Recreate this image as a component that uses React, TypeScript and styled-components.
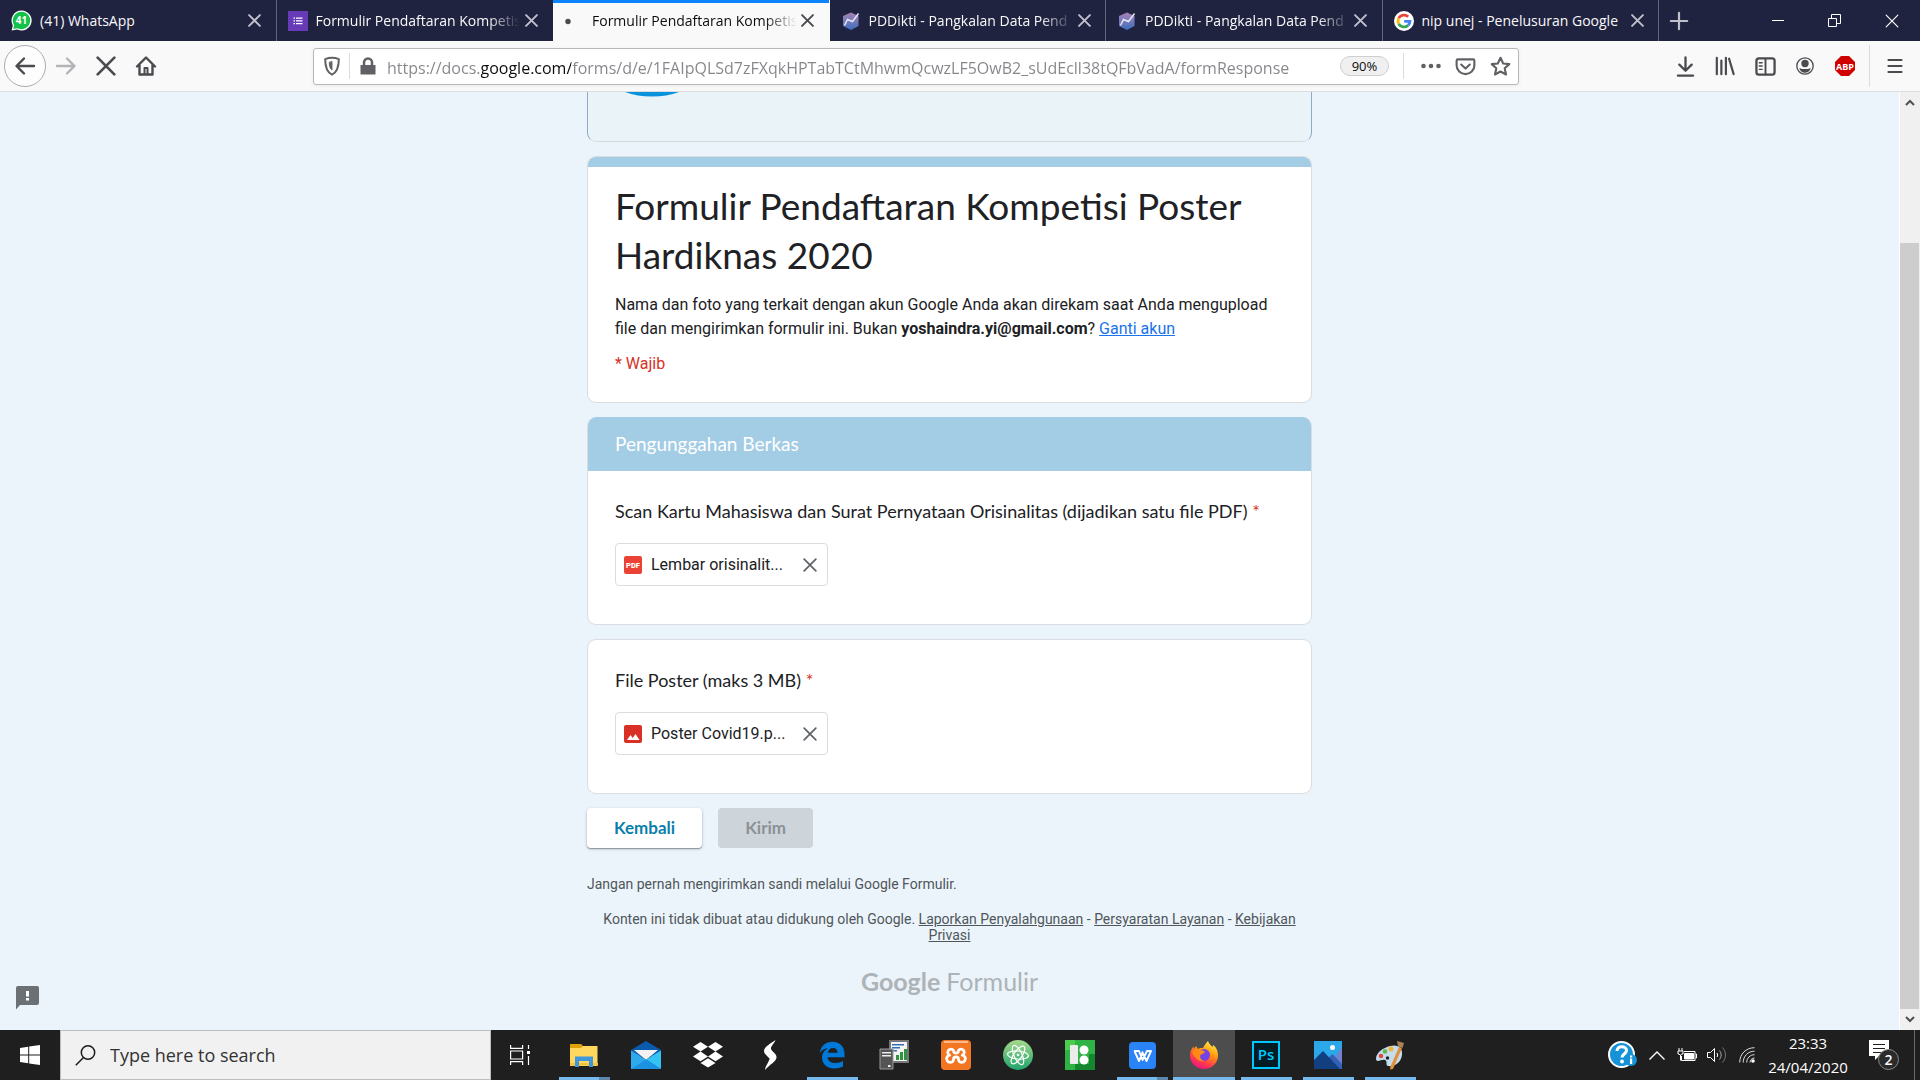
import React from "react";
import styled, { createGlobalStyle, css } from "styled-components";

const uiFont = `"Open Sans", "Noto Sans", sans-serif`;
const bodyFont = `Roboto, "Liberation Sans", sans-serif`;
const displayFont = `Lato, "Open Sans", sans-serif`;

const GlobalStyle = createGlobalStyle`
  *, *::before, *::after { box-sizing: border-box; }
  body { margin: 0; overflow: hidden; }
  button { border: 0; padding: 0; background: none; font: inherit; color: inherit; cursor: pointer; }
  svg { display: block; flex: none; }
`;

const Desktop = styled.div`
  display: flex;
  flex-direction: column;
  height: 100vh;
  font-family: ${uiFont};
`;

/* ---------- tab strip ---------- */

const TabStrip = styled.header`
  display: flex;
  flex: none;
  height: 41px;
  background: #202340;
`;

const TabList = styled.div`
  display: flex;
  flex: 0 1 1659px;
  min-width: 0;
`;

const TabItem = styled.div<{ $active?: boolean; $divider?: boolean }>`
  display: flex;
  flex: 1;
  min-width: 0;
  align-items: center;
  gap: 8px;
  padding: 0 11px 0 11px;
  font-size: 14px;
  color: #f9f9fa;
  border-right: 1px solid transparent;
  ${(p) => p.$divider && css`border-right-color: #63657a;`}
  ${(p) =>
    p.$active &&
    css`
      color: #0c0c0d;
      background: #f9f9fa;
      box-shadow: inset 0 3px 0 #0a84ff;
    `}
`;

const TabTitle = styled.span<{ $fade?: boolean }>`
  flex: 1;
  min-width: 0;
  margin-right: -7px;
  overflow: hidden;
  white-space: nowrap;
  line-height: 20px;
  ${(p) => p.$fade && css`mask-image: linear-gradient(to left, transparent, #000 32px);`}
`;

const TabClose = styled.button<{ $active?: boolean }>`
  display: grid;
  place-items: center;
  width: 20px;
  height: 20px;
  color: ${(p) => (p.$active ? "#4a4a4f" : "#bfc0cc")};
`;

const NewTab = styled.button`
  display: grid;
  place-items: center;
  width: 40px;
  color: #bfc0cc;
`;

const WindowButtons = styled.div`
  display: flex;
  margin-left: auto;
  color: #fff;
`;

const WindowButton = styled.button`
  display: grid;
  place-items: center;
  width: 57px;
`;

/* ---------- toolbar ---------- */

const Toolbar = styled.nav`
  display: flex;
  flex: none;
  align-items: center;
  height: 51px;
  padding-left: 5px;
  background: #f9f9fa;
  border-bottom: 1px solid #dcdcde;
  color: #4a4a4f;
`;

const ToolButton = styled.button<{ $round?: boolean; $dim?: boolean; $wide?: boolean }>`
  display: grid;
  flex: none;
  place-items: center;
  width: ${(p) => (p.$wide ? 50 : 40)}px;
  height: 40px;
  ${(p) => p.$dim && css`color: #b4b4b7;`}
  ${(p) =>
    p.$round &&
    css`
      width: 42px;
      height: 42px;
      margin-left: -1px;
      border: 1px solid #acacae;
      border-radius: 50%;
      background: #fdfdfd;
    `}
`;

const Divider = styled.span<{ $tall?: boolean }>`
  flex: none;
  width: 1px;
  height: ${(p) => (p.$tall ? 42 : 26)}px;
  margin-left: ${(p) => (p.$tall ? 4 : 0)}px;
  background: #dcdcde;
`;

const UrlBar = styled.div`
  display: flex;
  flex: 1;
  min-width: 0;
  align-items: center;
  height: 37px;
  margin: 0 146px 0 147px;
  background: #fff;
  border: 1px solid #b8b8ba;
  border-radius: 3px;
  box-shadow: 0 1px 4px rgba(0, 0, 0, 0.06);
  color: #616165;
`;

const UrlActions = styled.div`
  display: flex;
  flex: none;
  padding-left: 9px;
`;

const UrlIcon = styled.button`
  display: grid;
  flex: none;
  place-items: center;
  width: 35px;
  height: 35px;
`;

const UrlInput = styled.input`
  flex: 1;
  min-width: 0;
  height: 32px;
  padding: 3px 0 0 2px;
  border: 0;
  outline: 0;
  font: 16px/24px ${uiFont};
  color: transparent;
  background: linear-gradient(to right, #85858a 96px, #0c0c0d 96px, #0c0c0d 186px, #85858a 186px);
  background-clip: text;
  -webkit-background-clip: text;
`;

const ZoomBadge = styled.button`
  flex: none;
  width: 49px;
  height: 20px;
  margin-right: 14px;
  border: 1px solid #cfcfd1;
  border-radius: 10px;
  background: #f0f0f1;
  color: #0c0c0d;
  font-size: 13px;
  line-height: 18px;
`;

/* ---------- page ---------- */

const Viewport = styled.div`
  display: flex;
  flex: 1;
  min-height: 0;
`;

const Page = styled.main`
  display: flex;
  flex: 1;
  min-width: 0;
  flex-direction: column;
  align-items: center;
  position: relative;
  overflow: hidden;
  background: #ebf4fa;
  font-family: ${bodyFont};
  color: #202124;
`;

const Form = styled.form`
  display: flex;
  flex-direction: column;
  gap: 14px;
  width: 100%;
  max-width: 725px;
`;

const Banner = styled.div`
  height: 50px;
  overflow: hidden;
  border: 1px solid #d5dce1;
  border-top: 0;
  border-left-color: #8fa9cb;
  border-right-color: #8fa9cb;
  border-radius: 0 0 9px 9px;
  background: #eaf3f8;
`;

const Card = styled.section`
  overflow: hidden;
  border: 1px solid #dadce0;
  border-radius: 9px;
  background: #fff;
`;

const IntroCard = styled(Card)`
  padding: 0 27px 26px;
`;

const IntroBand = styled.div`
  height: 11px;
  margin: -1px -28px 14px;
  background: #a3cce5;
`;

const FormTitle = styled.h1`
  margin: 0 0 14px;
  font: 400 37px/49px ${displayFont};
`;

const Notice = styled.p`
  margin: 0 0 11px;
  font-size: 16px;
  line-height: 24px;
  &:last-child {
    margin-bottom: 0;
  }
`;

const AccountLink = styled.a`
  color: #1a73e8;
`;

const Required = styled.span`
  color: #d93025;
`;

const SectionCard = styled(Card)`
  border-top: 0;
`;

const SectionHead = styled.h2`
  margin: 0 -1px;
  padding: 15px 28px;
  background: #a3cce5;
  color: #fff;
  font: 400 19px/24px ${displayFont};
`;

const Question = styled.div`
  padding: 27px 27px 38px;
`;

const QuestionTitle = styled.h3`
  margin: 0 0 19px;
  font: 400 18px/26px ${displayFont};
`;

const FileChip = styled.div`
  display: flex;
  align-items: center;
  width: 213px;
  height: 43px;
  padding: 0 7px 0 8px;
  border: 1px solid #dadce0;
  border-radius: 4px;
`;

const FileName = styled.span`
  flex: 1;
  margin-left: 9px;
  font-size: 16px;
  line-height: 24px;
  white-space: nowrap;
`;

const RemoveFile = styled.button`
  display: grid;
  place-items: center;
  width: 20px;
  height: 24px;
  color: #5f6368;
`;

const Actions = styled.div`
  display: flex;
  gap: 16px;
`;

const ActionButton = styled.button<{ $disabled?: boolean }>`
  height: 40px;
  padding: 0 27px;
  border-radius: 4px;
  background: #fff;
  color: #0b7fab;
  font: 700 17px/24px ${displayFont};
  box-shadow: 0 1px 3px rgba(60, 64, 67, 0.3), 0 1px 1px rgba(60, 64, 67, 0.4);
  ${(p) =>
    p.$disabled &&
    css`
      background: #ced5da;
      color: #8b9196;
      box-shadow: none;
    `}
`;

const Footer = styled.footer`
  width: 100%;
  max-width: 725px;
  color: #50565a;
  font-size: 14px;
  line-height: 16px;
`;

const Warning = styled.p`
  margin: 28px 0 19px;
`;

const Legal = styled.p`
  margin: 0;
  padding: 0 12px;
  text-align: center;
`;

const FooterLink = styled.a`
  color: inherit;
`;

const Brand = styled.a`
  display: flex;
  justify-content: center;
  align-items: baseline;
  gap: 6px;
  margin-top: 22px;
  color: #adb3b7;
  font: 400 25px/32px ${displayFont};
  text-decoration: none;
`;

const BrandName = styled.span`
  font-weight: 700;
`;

const Feedback = styled.button`
  position: absolute;
  left: 15px;
  bottom: 20px;
  color: #6b7074;
`;

const Scrollbar = styled.div`
  display: flex;
  flex: none;
  flex-direction: column;
  width: 21px;
  background: #f0f0f0;
  border-left: 1px solid #fff;
`;

const ScrollButton = styled.button`
  display: grid;
  place-items: center;
  height: 21px;
  color: #505050;
`;

const ScrollTrack = styled.div`
  display: flex;
  flex: 1;
  align-items: flex-end;
`;

const ScrollThumb = styled.div`
  flex: 1;
  height: 85.5%;
  margin-right: 1px;
  background: #cdcdcd;
`;

/* ---------- taskbar ---------- */

const Taskbar = styled.footer`
  display: flex;
  flex: none;
  height: 50px;
  background: #1f1f1f;
  color: #fff;
`;

const StartButton = styled.button`
  display: grid;
  place-items: center;
  width: 60px;
`;

const SearchBox = styled.label`
  display: flex;
  align-items: center;
  gap: 14px;
  width: 431px;
  padding: 0 14px;
  border: 1px solid #bdbdbd;
  background: #f1f1f1;
  color: #1b1b1b;
`;

const SearchInput = styled.input`
  flex: 1;
  min-width: 0;
  padding: 0;
  border: 0;
  outline: 0;
  background: none;
  font: 18px/24px ${uiFont};
  &::placeholder {
    color: #333;
    opacity: 1;
  }
`;

const TaskButton = styled.button<{ $state?: "open" | "stacked" | "active" }>`
  display: grid;
  place-items: center;
  width: 62px;
  border-bottom: 3px solid transparent;
  border-top: 3px solid transparent;
  background: no-repeat center bottom / 51px 3px border-box;
  ${(p) => p.$state === "open" && css`background-image: linear-gradient(#76b9ed, #76b9ed);`}
  ${(p) =>
    p.$state === "stacked" &&
    css`background-image: linear-gradient(to right, #76b9ed 40px, #5a87ab 40px);`}
  ${(p) =>
    p.$state === "active" &&
    css`
      background: #4d4d4d;
      background-clip: border-box;
      border-top-color: #4d4d4d;
      border-bottom-color: #76b9ed;
    `}
`;

const Tray = styled.div`
  display: flex;
  align-items: stretch;
  margin-left: auto;
`;

const TrayButton = styled.button<{ $wide?: boolean }>`
  display: grid;
  place-items: center;
  width: ${(p) => (p.$wide ? 38 : 30)}px;
`;

const Clock = styled.button`
  width: 92px;
  font-size: 15px;
  line-height: 24px;
  white-space: nowrap;
`;

const Notifications = styled.button`
  display: grid;
  place-items: center;
  width: 60px;
`;

const ShowDesktop = styled.button`
  width: 6px;
  border-left: 1px solid #6b6b6b;
`;

/* ---------- icons ---------- */

const Cross = ({ size = 12, width = 2 }: { size?: number; width?: number }) => (
  <svg width={size} height={size} viewBox="0 0 12 12" fill="none" stroke="currentColor" strokeWidth={width} strokeLinecap="round">
    <path d="M1 1l10 10M11 1L1 11" />
  </svg>
);

const Stroke = ({ children, size = 22, width = 2.4 }: { children: React.ReactNode; size?: number; width?: number }) => (
  <svg width={size} height={size} viewBox="0 0 22 22" fill="none" stroke="currentColor" strokeWidth={width} strokeLinecap="round" strokeLinejoin="round">
    {children}
  </svg>
);

const WhatsAppIcon = () => (
  <svg width="21" height="21" viewBox="0 0 21 21">
    <path d="M10.5.5a10 10 0 1 1-4 19.1L.6 20.6l1.200-5.200A10 10 0 0 1 10.500.5z" fill="#fff" />
    <path d="M10.500 1.700a8.700 8.700 0 1 1-3.900 16.500l-4.300.900.900-4A8.700 8.700 0 0 1 10.500 1.700z" fill="#14c24b" />
    <text x="10.500" y="14" fontSize="10" fontWeight="700" fill="#fff" textAnchor="middle" fontFamily="Open Sans">41</text>
  </svg>
);

const FormsIcon = () => (
  <svg width="20" height="20" viewBox="0 0 20 20">
    <path fill="#673ab7" d="M0 0h20v20H0z" />
    <path fill="#fff" d="M5.500 6.500h1.500v1.300H5.500zM8 6.500h6.500v1.300H8zM5.500 9.300h1.500v1.300H5.500zM8 9.300h6.500v1.300H8zM5.500 12h1.500v1.300H5.500zM8 12h6.500v1.300H8z" />
  </svg>
);

const LoadingDot = () => (
  <svg width="20" height="20" viewBox="0 0 20 20">
    <circle cx="4" cy="10.500" r="2.700" fill="#4a4a4f" />
  </svg>
);

const PddiktiIcon = () => (
  <svg width="20" height="20" viewBox="0 0 20 20">
    <defs>
      <linearGradient id="pddikti" x1="0" y1="0" x2="0" y2="1">
        <stop offset="0" stopColor="#a883b5" />
        <stop offset="1" stopColor="#3d6fbe" />
      </linearGradient>
    </defs>
    <path d="M10 1.500l7.500 3.500v10L10 19l-8-4V5z" fill="url(#pddikti)" />
    <path d="M3.500 14.500L6.500 8.500l5 2L17.500 2.500" fill="none" stroke="#e9e6f5" strokeWidth="1.500" />
  </svg>
);

const GoogleIcon = () => (
  <svg width="20" height="20" viewBox="0 0 20 20">
    <circle cx="10" cy="10" r="10" fill="#fff" />
    <g fill="none" strokeWidth="2.800">
      <path d="M14.200 5.800A6 6 0 0 0 4.700 7.200" stroke="#ea4335" />
      <path d="M4.700 7.200a6 6 0 0 0 0 5.600" stroke="#fbbc05" />
      <path d="M4.700 12.800a6 6 0 0 0 9.300 1.600" stroke="#34a853" />
      <path d="M14 14.400A6 6 0 0 0 16 10.300H10.200" stroke="#4285f4" />
    </g>
  </svg>
);

const AbpIcon = () => (
  <svg width="20" height="20" viewBox="0 0 20 20">
    <path d="M6 0h8l6 6v8l-6 6H6l-6-6V6z" fill="#d00000" />
    <text x="10" y="13.500" fontSize="9" fontWeight="700" fill="#fff" textAnchor="middle" fontFamily="Open Sans">ABP</text>
  </svg>
);

const PdfIcon = () => (
  <svg width="18" height="18" viewBox="0 0 18 18">
    <rect width="18" height="18" rx="2" fill="#ea4335" />
    <text x="9" y="11.800" fontSize="7.500" fontWeight="900" fill="#fff" textAnchor="middle" fontFamily="Roboto">PDF</text>
  </svg>
);

const ImageIcon = () => (
  <svg width="18" height="18" viewBox="0 0 18 18">
    <rect width="18" height="18" rx="2" fill="#d93025" />
    <path d="M3 15l3.500-5 2.200 3 2.800-4 4 6z" fill="#fff" />
  </svg>
);

const appIcons = {
  explorer: (
    <svg width="28" height="26" viewBox="0 0 28 26">
      <path d="M0 2h11l3 3-3 4H0z" fill="#e0a106" />
      <path d="M13 4h14.500v20H0V6h11z" fill="#ffd75e" />
      <path d="M0 21h28v2.500H0z" fill="#f5c33b" />
      <path d="M5 14.500h18V25h-4v-6H9v6H5z" fill="#3f96da" />
    </svg>
  ),
  mail: (
    <svg width="30" height="28" viewBox="0 0 30 28">
      <path d="M0 9L15 0l15 9v6H0z" fill="#0a5aae" />
      <path d="M3 9h24L15 19z" fill="#f2f2f2" />
      <path d="M0 9.500l15 9L30 28H0z" fill="#2fa8ec" />
      <path d="M30 9.500L15 18.500 30 28z" fill="#35c3f5" />
      <path d="M0 28l15-9.500L30 28z" fill="#1c93e2" />
    </svg>
  ),
  dropbox: (
    <svg width="30" height="26" viewBox="0 0 30 26" fill="#fff">
      <path d="M7.500 0L15 4.800 7.500 9.600 0 4.800zM22.500 0L30 4.800l-7.500 4.800L15 4.800zM7.500 9.600l7.500 4.800-7.500 4.800L0 14.400zM22.500 9.600l7.500 4.800-7.500 4.800-7.500-4.800zM15 16.200l7.500 4.700L15 25.500l-7.500-4.600z" />
    </svg>
  ),
  bolt: (
    <svg width="16" height="30" viewBox="0 0 16 30" fill="#fff">
      <path d="M13.500 0C9 3 2 7 2 11c0 2 1.500 3.500 3.500 5.500L9 20l5.500-2.500C15 14 10 12 9 9c-.5-3 3-5 4.500-9z" />
      <path d="M14.500 17.500C14 22 8 24 3 30c0-3 2-5 3-7.500L9 16z" />
    </svg>
  ),
  edge: (
    <svg width="26" height="28" viewBox="0 0 26 28" fill="#0078d7">
      <path d="M.8 12C2 4.500 7 .8 13.500.8 21 .8 25.500 6 25.500 13v3.200H8.500c.3 4 4 5.800 8 5.800 3 0 5.500-.8 7.500-2v5.500c-2.300 1.300-5.500 2-8.500 2C8 27.500 3 23 3 16.500 3 12 6 9 9 7.300 5 7.800 2.500 9.300.8 12zM9 11.800h9.500c0-3-1.500-4.800-4.500-4.800-2.800 0-4.600 2-5 4.800z" />
    </svg>
  ),
  server: (
    <svg width="30" height="30" viewBox="0 0 30 30">
      <path d="M11 1h18v21H11z" fill="#f4f4f4" stroke="#777" strokeWidth="2" />
      <path d="M13 4h12v1.500H13zM13 7h8v1.500h-8zM13 10h5v1.500h-5z" fill="#2f6fb5" />
      <path d="M17 15h3v5h-3zM21 12h3v8h-3zM25 9h3v11h-3z" fill="#2f9440" />
      <path d="M1 9h13v20H1z" fill="#555" stroke="#9a9a9a" />
      <path d="M3 12h9v1.500H3zM3 15h9v1.500H3zM9 25h2.500v2H9z" fill="#eee" />
    </svg>
  ),
  xampp: (
    <svg width="30" height="30" viewBox="0 0 30 30">
      <rect width="30" height="30" rx="4" fill="#f37623" />
      <path d="M3 1h24v2H3z" fill="#f9b98a" />
      <path d="M12.500 11.500V10.300a3.200 3.200 0 1 0-3.800 4.900 3.600 3.600 0 1 0 3.800 5V18.500M17.500 11.500V10.300a3.200 3.200 0 1 1 3.800 4.900 3.600 3.600 0 1 1-3.800 5V18.500M12.500 11.500c.5 2 4.500 2 5 0M12.500 18.500c.5-2 4.500-2 5 0" fill="none" stroke="#fff" strokeWidth="2.800" strokeLinejoin="round" />
    </svg>
  ),
  atom: (
    <svg width="30" height="30" viewBox="0 0 30 30">
      <defs>
        <linearGradient id="atom" x1="0" y1="0" x2="0" y2="1">
          <stop offset="0" stopColor="#a5d98c" />
          <stop offset="1" stopColor="#1fa36c" />
        </linearGradient>
      </defs>
      <circle cx="15" cy="15" r="15" fill="url(#atom)" />
      <g fill="none" stroke="#fff" strokeWidth="1.200">
        <ellipse cx="15" cy="15" rx="10.500" ry="4" transform="rotate(5 15 15)" />
        <ellipse cx="15" cy="15" rx="10.500" ry="4" transform="rotate(65 15 15)" />
        <ellipse cx="15" cy="15" rx="10.500" ry="4" transform="rotate(125 15 15)" />
      </g>
      <circle cx="15" cy="15" r="1.300" fill="#fff" />
    </svg>
  ),
  icons8: (
    <svg width="30" height="30" viewBox="0 0 30 30">
      <path d="M0 0h30v30H0z" fill="#2fb344" />
      <path d="M0 0h10v10H0z" fill="#4dcc4d" />
      <path d="M10 24h20v6H10zM24 14h6v16h-6z" fill="#15872f" />
      <rect x="5" y="5" width="8" height="19" rx="1" fill="#ececec" />
      <circle cx="19" cy="10" r="4.500" fill="#fff" />
      <circle cx="19" cy="20" r="4.500" fill="#fff" />
    </svg>
  ),
  wps: (
    <svg width="27" height="27" viewBox="0 0 27 27">
      <rect width="27" height="27" rx="4" fill="#2b84f5" />
      <path d="M5 9h5l3.500 9L18 9h4l-4.500 10L13 9.500M5.500 9L10 19l3.500-8" fill="none" stroke="#fff" strokeWidth="1.900" strokeLinejoin="round" />
    </svg>
  ),
  firefox: (
    <svg width="30" height="30" viewBox="0 0 30 30">
      <defs>
        <linearGradient id="fox" x1=".8" y1="0" x2=".3" y2="1">
          <stop offset="0" stopColor="#fff44f" />
          <stop offset=".4" stopColor="#ff980e" />
          <stop offset=".75" stopColor="#ff3750" />
          <stop offset="1" stopColor="#e31587" />
        </linearGradient>
      </defs>
      <path d="M19 1c1 3 3 4 4.500 6l1-2C28 8 29 12 29 15.500 29 23 23 29 15 29S1 23 1 15.500C1 12 2 9 4.500 6.500L5 9l2-3 2 3c2-1.500 3-1 5-1 1.500-3 3-5 5-7z" fill="url(#fox)" />
      <circle cx="15" cy="15" r="6" fill="#7542e5" />
      <path d="M3 12c3-3 6-3.500 8-2 2 .5 4 0 5 2-1 2-3 1.500-4.500 3-1 2.500 0 5 4 6-6 1.500-9.500-3-12.500-9z" fill="#ff8a16" />
    </svg>
  ),
  photoshop: (
    <svg width="28" height="28" viewBox="0 0 28 28">
      <path d="M1 1h26v26H1z" fill="#001d26" stroke="#00c8ff" strokeWidth="2" />
      <text x="14" y="19" fontSize="15" fontWeight="600" fill="#00c8ff" textAnchor="middle" fontFamily="Open Sans">Ps</text>
    </svg>
  ),
  photos: (
    <svg width="28" height="28" viewBox="0 0 28 28">
      <path d="M0 0h28v28H0z" fill="#2aa8ea" />
      <path d="M28 6v22H12z" fill="#6f83d2" />
      <path d="M10 21l8.500-8L28 23v5H10z" fill="#3461b8" />
      <path d="M0 19L9 10l17 18H0z" fill="#123f80" />
      <circle cx="18.500" cy="6.500" r="2.500" fill="#fff" />
    </svg>
  ),
  paint: (
    <svg width="30" height="30" viewBox="0 0 30 30">
      <path d="M15 6c8-2 13 2 12 9-1 8-8 12-14 11-3-1 0-5-3-6-4-1-9 4-9-2C2 12 8 8 15 6z" fill="#c5dcef" />
      <circle cx="6" cy="16" r="2.300" fill="#e0493f" />
      <circle cx="10" cy="11.500" r="2.300" fill="#5db948" />
      <circle cx="16" cy="9" r="2.500" fill="#f2b632" />
      <circle cx="12.500" cy="18" r="1.700" fill="#1f1f1f" />
      <path d="M24 7l3 1-9 21-3 .5.500-3z" fill="#e0913a" />
      <path d="M22 1l7 2-1.500 5-4.500-1.500z" fill="#a98458" />
    </svg>
  ),
};

const tabs = [
  { title: "(41) WhatsApp", icon: <WhatsAppIcon />, divider: true },
  { title: "Formulir Pendaftaran Kompetisi", icon: <FormsIcon />, fade: true },
  { title: "Formulir Pendaftaran Kompetisi", icon: <LoadingDot />, active: true, fade: true },
  { title: "PDDikti - Pangkalan Data Pend", icon: <PddiktiIcon />, divider: true, fade: true },
  { title: "PDDikti - Pangkalan Data Pend", icon: <PddiktiIcon />, divider: true, fade: true },
  { title: "nip unej - Penelusuran Google", icon: <GoogleIcon />, divider: true },
];

const apps: { name: string; icon: React.ReactNode; state?: "open" | "stacked" | "active" }[] = [
  { name: "File Explorer", icon: appIcons.explorer, state: "stacked" },
  { name: "Mail", icon: appIcons.mail },
  { name: "Dropbox", icon: appIcons.dropbox },
  { name: "Shortcut", icon: appIcons.bolt },
  { name: "Edge", icon: appIcons.edge, state: "open" },
  { name: "Server", icon: appIcons.server },
  { name: "XAMPP", icon: appIcons.xampp },
  { name: "Atom", icon: appIcons.atom },
  { name: "Icons8", icon: appIcons.icons8 },
  { name: "WPS", icon: appIcons.wps, state: "stacked" },
  { name: "Firefox", icon: appIcons.firefox, state: "active" },
  { name: "Photoshop", icon: appIcons.photoshop, state: "open" },
  { name: "Photos", icon: appIcons.photos, state: "open" },
  { name: "Paint", icon: appIcons.paint, state: "open" },
];

function UploadQuestion({ title, file, icon }: { title: string; file: string; icon: React.ReactNode }) {
  return (
    <Question>
      <QuestionTitle>
        {title} <Required>*</Required>
      </QuestionTitle>
      <FileChip>
        {icon}
        <FileName>{file}</FileName>
        <RemoveFile type="button" aria-label="Hapus file">
          <Cross size={14} width={1.5} />
        </RemoveFile>
      </FileChip>
    </Question>
  );
}

export default function App() {
  return (
    <Desktop>
      <GlobalStyle />
      <TabStrip>
        <TabList>
          {tabs.map((t, i) => (
            <TabItem key={i} $active={t.active} $divider={t.divider}>
              {t.icon}
              <TabTitle $fade={t.fade}>{t.title}</TabTitle>
              <TabClose $active={t.active} aria-label="Close tab">
                <Cross size={13} width={1.8} />
              </TabClose>
            </TabItem>
          ))}
        </TabList>
        <NewTab aria-label="New tab">
          <Stroke size={20} width={2.4}><path d="M11 2v18M2 11h18" /></Stroke>
        </NewTab>
        <WindowButtons>
          <WindowButton aria-label="Minimize">
            <svg width="12" height="12" viewBox="0 0 12 12" stroke="currentColor"><path d="M0 5.500h12" /></svg>
          </WindowButton>
          <WindowButton aria-label="Restore">
            <svg width="13" height="13" viewBox="0 0 13 13" fill="none" stroke="currentColor"><path d="M.5 4.500h8v8h-8zM3.500 4.500v-4h9v9h-4" /></svg>
          </WindowButton>
          <WindowButton aria-label="Close">
            <Cross size={14} width={1} />
          </WindowButton>
        </WindowButtons>
      </TabStrip>

      <Toolbar>
        <ToolButton $round aria-label="Back">
          <Stroke><path d="M20 11H3M10 3.500L2.500 11l7.500 7.500" /></Stroke>
        </ToolButton>
        <ToolButton $dim aria-label="Forward">
          <Stroke><path d="M2 11h17M12 3.500l7.500 7.500-7.500 7.500" /></Stroke>
        </ToolButton>
        <ToolButton aria-label="Stop"><Cross size={20} width={1.6} /></ToolButton>
        <ToolButton aria-label="Home">
          <Stroke>
            <path d="M2 11.500L11 2.500l9 9M4.500 10v9.500h13V10" />
            <path d="M9.500 19v-6h3v6" strokeWidth="2" />
          </Stroke>
        </ToolButton>
        <UrlBar>
          <UrlIcon aria-label="Tracking protection">
            <Stroke size={20} width={2.2}>
              <path d="M11 2c2.500 0 5 .5 7.500 1.500C18.500 12 17 17.500 11 20.500 5 17.500 3.500 12 3.500 3.500 6 2.500 8.500 2 11 2z" />
              <path d="M11 6.500v9c-2-1.500-3-4-3-8.300z" fill="currentColor" strokeWidth="1" />
            </Stroke>
          </UrlIcon>
          <Divider />
          <UrlIcon aria-label="Site information">
            <svg width="16" height="18" viewBox="0 0 16 18"><path d="M.5 8h15v9.500H.5z" fill="currentColor" /><path d="M4 8V5.500a4 4 0 0 1 8 0V8" fill="none" stroke="currentColor" strokeWidth="2.500" /></svg>
          </UrlIcon>
          <UrlInput aria-label="Address" defaultValue="https://docs.google.com/forms/d/e/1FAIpQLSd7zFXqkHPTabTCtMhwmQcwzLF5OwB2_sUdEcll38tQFbVadA/formResponse" />
          <ZoomBadge>90%</ZoomBadge>
          <Divider />
          <UrlActions>
            <UrlIcon aria-label="Page actions">
              <svg width="20" height="6" viewBox="0 0 20 6" fill="currentColor"><circle cx="2.500" cy="3" r="2.300" /><circle cx="10" cy="3" r="2.300" /><circle cx="17.500" cy="3" r="2.300" /></svg>
            </UrlIcon>
            <UrlIcon aria-label="Save to Pocket">
              <Stroke size={21} width={2.2}><path d="M3 3.500h16c.8 0 1.300.5 1.300 1.300V10a9.300 9 0 0 1-18.600 0V4.800C1.700 4 2.200 3.500 3 3.500z" /><path d="M6.500 9l4.500 4.200L15.500 9" /></Stroke>
            </UrlIcon>
            <UrlIcon aria-label="Bookmark">
              <Stroke size={21} width={2.2}><path d="M11 1.800l2.800 6 6.400.7-4.800 4.400 1.400 6.500L11 16.200l-5.800 3.200 1.400-6.500-4.800-4.400 6.400-.7z" /></Stroke>
            </UrlIcon>
          </UrlActions>
        </UrlBar>
        <ToolButton aria-label="Downloads">
          <Stroke size={21}><path d="M11 1.500v13M4.500 9l6.500 6.500L17.500 9M3 20.500h16" /></Stroke>
        </ToolButton>
        <ToolButton aria-label="Library">
          <Stroke size={20}><path d="M2 2v18M7 5v15M12 2v18M15.500 3l5 17" /></Stroke>
        </ToolButton>
        <ToolButton aria-label="Sidebars">
          <Stroke size={21}><rect x="1.500" y="2.500" width="19" height="17" rx="2.500" /><path d="M11 3v16" strokeWidth="2" /><path d="M4.500 7h3M4.500 10.500h3M4.500 14h3" strokeWidth="1.500" /></Stroke>
        </ToolButton>
        <ToolButton aria-label="Account">
          <svg width="18" height="18" viewBox="0 0 18 18"><circle cx="9" cy="9" r="8.200" fill="none" stroke="currentColor" strokeWidth="1.300" /><circle cx="9" cy="6.500" r="3.700" fill="currentColor" /><path d="M3.300 11c2 1 3 1 5.700 1s3.700 0 5.700-1c-.5 3-3 4.800-5.700 4.800S3.800 14 3.300 11z" fill="currentColor" /></svg>
        </ToolButton>
        <ToolButton aria-label="Adblock Plus"><AbpIcon /></ToolButton>
        <Divider $tall />
        <ToolButton $wide aria-label="Menu">
          <svg width="16" height="16" viewBox="0 0 16 16" stroke="currentColor" strokeWidth="2.200" strokeLinecap="round"><path d="M1.500 2h13M1.500 8h13M1.500 14h13" /></svg>
        </ToolButton>
      </Toolbar>

      <Viewport>
        <Page>
          <Form onSubmit={(e) => e.preventDefault()}>
            <Banner>
              <svg width="120" height="6" viewBox="0 0 120 6"><path d="M37 0h54c-8 3-17 4.500-27 4.500S45 3 37 0z" fill="#0a93dd" /></svg>
            </Banner>
            <IntroCard>
              <IntroBand />
              <FormTitle>Formulir Pendaftaran Kompetisi Poster Hardiknas 2020</FormTitle>
              <Notice>
                Nama dan foto yang terkait dengan akun Google Anda akan direkam saat Anda mengupload file dan mengirimkan formulir ini. Bukan <b>yoshaindra.yi@gmail.com</b>? <AccountLink href="#akun">Ganti akun</AccountLink>
              </Notice>
              <Notice><Required>* Wajib</Required></Notice>
            </IntroCard>
            <SectionCard>
              <SectionHead>Pengunggahan Berkas</SectionHead>
              <UploadQuestion title="Scan Kartu Mahasiswa dan Surat Pernyataan Orisinalitas (dijadikan satu file PDF)" file="Lembar orisinalit..." icon={<PdfIcon />} />
            </SectionCard>
            <Card>
              <UploadQuestion title="File Poster (maks 3 MB)" file="Poster Covid19.p..." icon={<ImageIcon />} />
            </Card>
            <Actions>
              <ActionButton type="button">Kembali</ActionButton>
              <ActionButton type="submit" $disabled>Kirim</ActionButton>
            </Actions>
          </Form>
          <Footer>
            <Warning>Jangan pernah mengirimkan sandi melalui Google Formulir.</Warning>
            <Legal>
              Konten ini tidak dibuat atau didukung oleh Google. <FooterLink href="#lapor">Laporkan Penyalahgunaan</FooterLink> - <FooterLink href="#layanan">Persyaratan Layanan</FooterLink> - <FooterLink href="#privasi">Kebijakan Privasi</FooterLink>
            </Legal>
            <Brand href="#formulir"><BrandName>Google</BrandName><span>Formulir</span></Brand>
          </Footer>
          <Feedback aria-label="Laporkan masalah">
            <svg width="24" height="24" viewBox="0 0 24 24"><path d="M3 0h19a2 2 0 0 1 2 2v15a2 2 0 0 1-2 2H5l-4 4.500V2a2 2 0 0 1 2-2z" fill="currentColor" /><path d="M11 5h3v5.500h-3zM11 12h3v2.500h-3z" fill="#fff" /></svg>
          </Feedback>
        </Page>
        <Scrollbar>
          <ScrollButton aria-label="Scroll up"><svg width="10" height="7" viewBox="0 0 10 7" fill="none" stroke="currentColor" strokeWidth="2"><path d="M1 6l4-4 4 4" /></svg></ScrollButton>
          <ScrollTrack><ScrollThumb /></ScrollTrack>
          <ScrollButton aria-label="Scroll down"><svg width="10" height="7" viewBox="0 0 10 7" fill="none" stroke="currentColor" strokeWidth="2"><path d="M1 1l4 4 4-4" /></svg></ScrollButton>
        </Scrollbar>
      </Viewport>

      <Taskbar>
        <StartButton aria-label="Start">
          <svg width="20" height="20" viewBox="0 0 20 20" fill="#fff"><path d="M0 3l8.200-1.200v7.700H0zM9.200 1.600L20 0v9.500H9.200zM0 10.500h8.200v7.700L0 17zM9.200 10.500H20V20L9.200 18.400z" /></svg>
        </StartButton>
        <SearchBox>
          <svg width="21" height="21" viewBox="0 0 21 21" fill="none" stroke="currentColor" strokeWidth="1.500"><circle cx="13" cy="7.500" r="6.700" /><path d="M8.500 12.500L.8 20.200" /></svg>
          <SearchInput aria-label="Search" placeholder="Type here to search" />
        </SearchBox>
        <TaskButton aria-label="Task view">
          <svg width="24" height="20" viewBox="0 0 24 20" fill="none" stroke="#fff" strokeWidth="1.200"><path d="M.6 0v3.400h12V0M.6 20v-3.400h12V20M.6 6h12v8H.6zM18.500 0v4M18.500 11v9" /><path d="M17 6h3v3h-3z" fill="#fff" stroke="none" /></svg>
        </TaskButton>
        {apps.map((a) => (
          <TaskButton key={a.name} aria-label={a.name} $state={a.state}>{a.icon}</TaskButton>
        ))}
        <Tray>
          <TrayButton $wide aria-label="Help">
            <svg width="30" height="28" viewBox="0 0 30 28"><circle cx="13.500" cy="13.500" r="12.500" fill="#1593d6" stroke="#fff" strokeWidth="2" /><path d="M9 10c0-6 9.500-5.500 9.500-.5 0 3.500-4.500 3.500-4.500 7" fill="none" stroke="#fff" strokeWidth="3" /><circle cx="14" cy="20.500" r="1.900" fill="#fff" /><circle cx="23" cy="19" r="6" fill="#1593d6" /><path d="M22 14.500h2.200v2H22zM22 17.500h2.200v5.500H22z" fill="#fff" /></svg>
          </TrayButton>
          <TrayButton aria-label="Hidden icons">
            <svg width="16" height="9" viewBox="0 0 16 9" fill="none" stroke="#fff" strokeWidth="1.400"><path d="M.5 8.500L8 1l7.500 7.500" /></svg>
          </TrayButton>
          <TrayButton aria-label="Battery">
            <svg width="20" height="14" viewBox="0 0 20 14" fill="none" stroke="#fff"><path d="M7 3.500h11v9H4.500V8" /><path d="M7.500 5.500h9v5.500h-9z" fill="#fff" /><path d="M18.500 6h1v4h-1M1 3h5v3H4.500L3.500 7.500 2 6H1zM2 0v3M5 0v3M3.500 7v5.500" /></svg>
          </TrayButton>
          <TrayButton aria-label="Volume">
            <svg width="20" height="18" viewBox="0 0 20 18" fill="none" stroke="#fff"><path d="M.5 6.500h3l4-4v13l-4-4h-3z" /><path d="M10 7c.8 1.300.8 2.700 0 4" /><path d="M12.500 4.500c2.200 3 2.200 6 0 9" stroke="#aaa" /><path d="M15.500 1.500c4 5 4 10 0 15" stroke="#777" /></svg>
          </TrayButton>
          <TrayButton aria-label="Wi-Fi">
            <svg width="16" height="16" viewBox="0 0 16 16" fill="none" stroke="#ddd"><path d="M.7 15.500C.7 7 7 .7 15.500.7M4.200 15.500c0-6.500 5-11.300 11.300-11.300M7.700 15.500c0-4.500 3.500-7.800 7.800-7.800M11 15.500c0-2.500 2-4.500 4.500-4.500" /><circle cx="14" cy="14" r="1.800" fill="#fff" stroke="none" /></svg>
          </TrayButton>
          <Clock>23:33<br />24/04/2020</Clock>
          <Notifications aria-label="Notifications">
            <svg width="30" height="30" viewBox="0 0 30 30"><path d="M0 0h20v16H10l-4 4v-4H0z" fill="#fff" /><path d="M4 4.500h12M4 8.500h12M4 12.500h12" stroke="#1f1f1f" /><circle cx="19.500" cy="19.500" r="10" fill="#2b2b2b" stroke="#8a8a8a" /><text x="19.500" y="25" fontSize="14" fontWeight="600" fill="#fff" textAnchor="middle" fontFamily="Open Sans">2</text></svg>
          </Notifications>
          <ShowDesktop aria-label="Show desktop" />
        </Tray>
      </Taskbar>
    </Desktop>
  );
}
